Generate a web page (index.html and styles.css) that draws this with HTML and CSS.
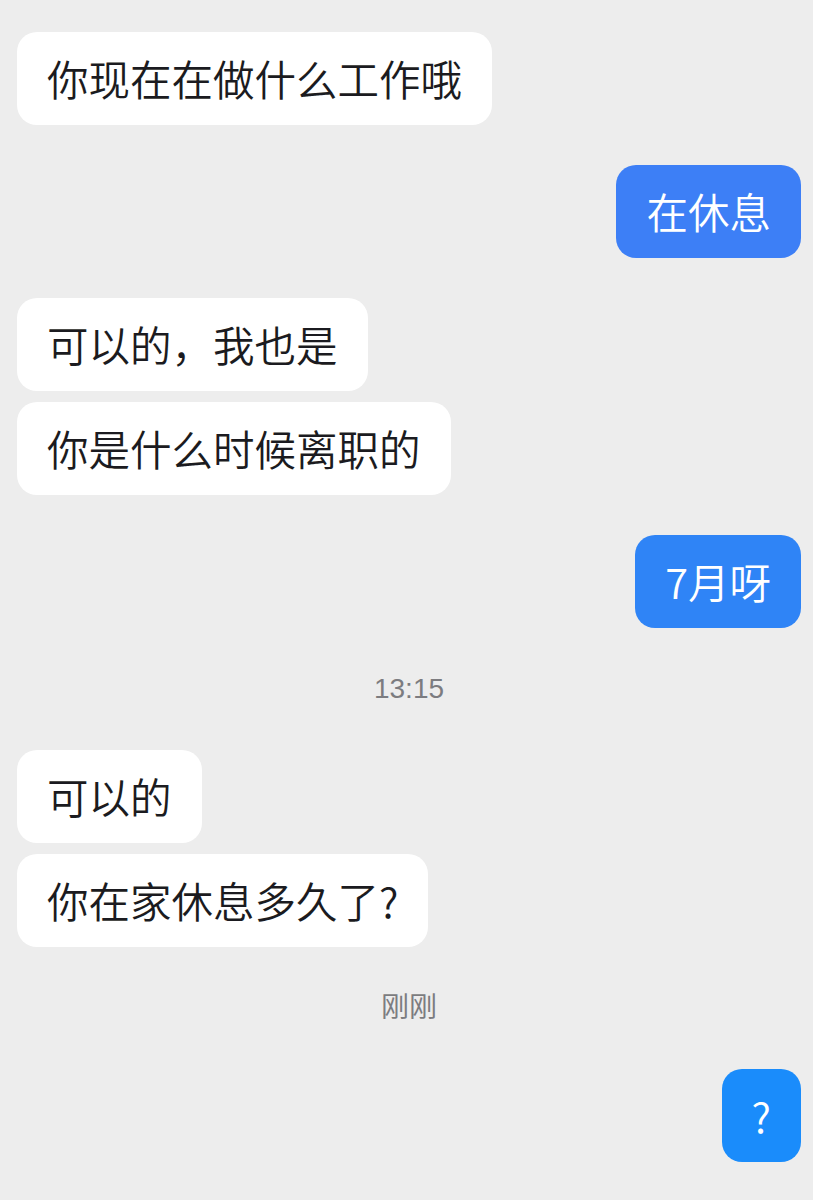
FILE: index.html
```html
<!DOCTYPE html>
<html lang="zh-CN">
<head>
    <meta charset="UTF-8">
    <meta name="viewport" content="width=device-width, initial-scale=1.0">
    <title>聊天</title>
    <link rel="stylesheet" href="styles.css">
</head>
<body>
    <div class="chat">
        <div class="group">
            <div class="msg left">你现在在做什么工作哦</div>
        </div>
        <div class="group">
            <div class="msg right blue-1">在休息</div>
        </div>
        <div class="group">
            <div class="msg left">可以的，我也是</div>
            <div class="msg left">你是什么时候离职的</div>
        </div>
        <div class="group">
            <div class="msg right blue-2">7月呀</div>
        </div>
        <div class="time">13:15</div>
        <div class="group">
            <div class="msg left">可以的</div>
            <div class="msg left">你在家休息多久了?</div>
        </div>
        <div class="time">刚刚</div>
        <div class="group">
            <div class="msg right blue-3">?</div>
        </div>
    </div>
</body>
</html>
```

FILE: styles.css
```css
body {
    margin: 0;
    background-color: #ededed;
    font-family: "Noto Sans CJK SC", "Noto Sans", sans-serif;
    height: 1200px;
}
.chat {
    display: flex;
    flex-direction: column;
    padding: 32px 12px 0 17px;
}
.group {
    display: flex;
    flex-direction: column;
    gap: 11px;
}
.group + .group {
    margin-top: 40px;
}
.msg {
    font-size: 41.5px;
    font-weight: 350;
    line-height: 49px;
    padding: 22px 30px;
    border-radius: 20px;
    white-space: nowrap;
}
.left {
    align-self: flex-start;
    background-color: #ffffff;
    color: #1b1b20;
}
.right {
    align-self: flex-end;
    color: #ffffff;
}
.blue-1 {
    background-color: #3d7ff6;
}
.blue-2 {
    background-color: #2f84f6;
}
.blue-3 {
    background-color: #1a8cfb;
}
.time {
    text-align: center;
    font-family: "Liberation Sans", "Noto Sans CJK SC", sans-serif;
    font-size: 28px;
    line-height: 40px;
    color: #7c7c80;
    margin: 41px 0 41px;
}
```
